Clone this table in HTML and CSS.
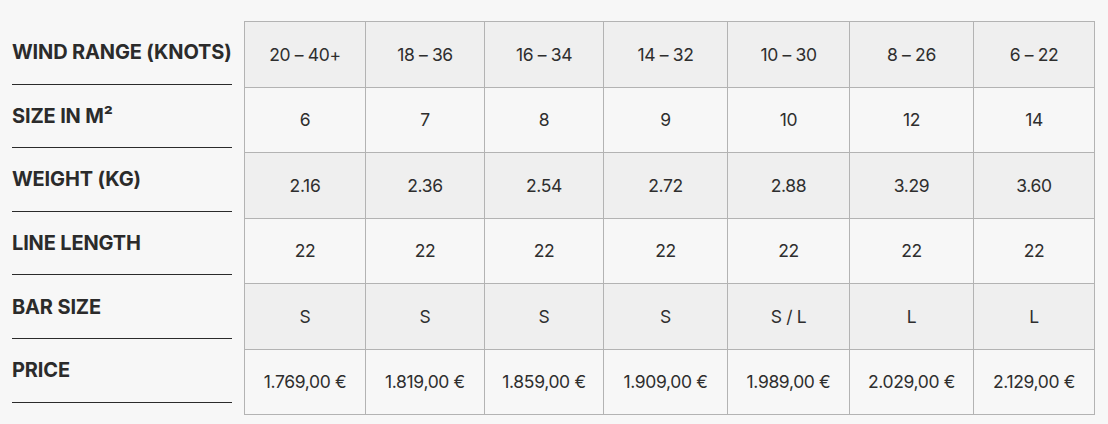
FILE: index.html
```html
<!DOCTYPE html>
<html>
<head>
<meta charset="utf-8">
<link rel="stylesheet" href="styles.css">
</head>
<body>
<div class="wrap">
  <div class="labels">
    <div class="label">WIND RANGE (KNOTS)</div>
    <div class="label">SIZE IN M²</div>
    <div class="label">WEIGHT (KG)</div>
    <div class="label">LINE LENGTH</div>
    <div class="label">BAR SIZE</div>
    <div class="label">PRICE</div>
  </div>
  <table class="specs">
    <colgroup>
      <col style="width:121px"><col style="width:119px"><col style="width:119px"><col style="width:124px"><col style="width:122px"><col style="width:124px"><col style="width:121px">
    </colgroup>
    <tr class="shade"><td>20 – 40+</td><td>18 – 36</td><td>16 – 34</td><td>14 – 32</td><td>10 – 30</td><td>8 – 26</td><td>6 – 22</td></tr>
    <tr><td>6</td><td>7</td><td>8</td><td>9</td><td>10</td><td>12</td><td>14</td></tr>
    <tr class="shade"><td>2.16</td><td>2.36</td><td>2.54</td><td>2.72</td><td>2.88</td><td>3.29</td><td>3.60</td></tr>
    <tr><td>22</td><td>22</td><td>22</td><td>22</td><td>22</td><td>22</td><td>22</td></tr>
    <tr class="shade"><td>S</td><td>S</td><td>S</td><td>S</td><td>S / L</td><td>L</td><td>L</td></tr>
    <tr><td>1.769,00 €</td><td>1.819,00 €</td><td>1.859,00 €</td><td>1.909,00 €</td><td>1.989,00 €</td><td>2.029,00 €</td><td>2.129,00 €</td></tr>
  </table>
</div>
</body>
</html>
```
FILE: styles.css
```css
html, body {
  margin: 0;
  padding: 0;
  background: #f7f7f7;
}
body {
  font-family: Inter, "Liberation Sans", sans-serif;
  color: #2b2b2b;
}
.wrap {
  display: flex;
  align-items: flex-start;
  padding: 21px 0 0 12px;
  gap: 12px;
}
.labels {
  width: 220px;
  display: flex;
  flex-direction: column;
}
.label {
  box-sizing: border-box;
  height: 63.6px;
  display: flex;
  align-items: center;
  font-weight: 700;
  font-size: 20px;
  letter-spacing: -0.15px;
  border-bottom: 1.5px solid #2b2b2b;
  padding-bottom: 0;
  white-space: nowrap;
}
.specs {
  border-collapse: collapse;
  table-layout: fixed;
  width: 851px;
}
.specs td {
  border: 1px solid #b3b3b3;
  height: 64.5px;
  padding: 0;
  text-align: center;
  vertical-align: middle;
  font-size: 17.5px;
  letter-spacing: -0.35px;
  color: #2e2e2e;
}
.specs tr.shade td {
  background: #efefef;
}
```
